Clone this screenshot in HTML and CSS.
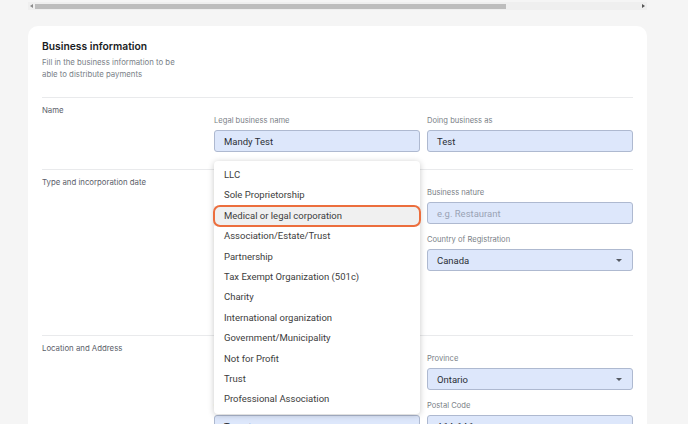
FILE: index.html
```html
<!DOCTYPE html>
<html lang="en">
<head>
<meta charset="utf-8">
<title>Business information</title>
<link rel="stylesheet" href="styles.css">
</head>
<body>
<div class="hscroll">
  <span class="arrow arrow-left"></span>
  <div class="track"><div class="thumb"></div></div>
  <span class="arrow arrow-right"></span>
</div>
<div class="card">
  <div class="header">
    <h1 class="title">Business information</h1>
    <p class="subtitle">Fill in the business information to be able to distribute payments</p>
  </div>

  <section class="section">
    <div class="section-title">Name</div>
    <div class="col">
      <div class="field">
        <div class="label">Legal business name</div>
        <div class="input">Mandy Test</div>
      </div>
    </div>
    <div class="col">
      <div class="field">
        <div class="label">Doing business as</div>
        <div class="input">Test</div>
      </div>
    </div>
  </section>

  <section class="section">
    <div class="section-title">Type and incorporation date</div>
    <div class="col">
      <div class="field">
        <div class="label">Business type</div>
        <div class="input select"><span class="caret"></span></div>
      </div>
      <div class="field">
        <div class="label">Incorporation date</div>
        <div class="input"></div>
      </div>
      <div class="field">
        <div class="label">Registration number</div>
        <div class="input"></div>
      </div>
    </div>
    <div class="col">
      <div class="field">
        <div class="label">Business nature</div>
        <div class="input placeholder">e.g. Restaurant</div>
      </div>
      <div class="field">
        <div class="label">Country of Registration</div>
        <div class="input select">Canada<span class="caret"></span></div>
      </div>
    </div>
  </section>

  <section class="section">
    <div class="section-title">Location and Address</div>
    <div class="col">
      <div class="field">
        <div class="label">Street address</div>
        <div class="input"></div>
      </div>
      <div class="field">
        <div class="label">City</div>
        <div class="input">Toronto</div>
      </div>
    </div>
    <div class="col">
      <div class="field">
        <div class="label">Province</div>
        <div class="input select">Ontario<span class="caret"></span></div>
      </div>
      <div class="field">
        <div class="label">Postal Code</div>
        <div class="input">A1A 1A1</div>
      </div>
    </div>
  </section>

  <ul class="menu">
    <li class="menu-item">LLC</li>
    <li class="menu-item">Sole Proprietorship</li>
    <li class="menu-item is-active">Medical or legal corporation</li>
    <li class="menu-item">Association/Estate/Trust</li>
    <li class="menu-item">Partnership</li>
    <li class="menu-item">Tax Exempt Organization (501c)</li>
    <li class="menu-item">Charity</li>
    <li class="menu-item">International organization</li>
    <li class="menu-item">Government/Municipality</li>
    <li class="menu-item">Not for Profit</li>
    <li class="menu-item">Trust</li>
    <li class="menu-item">Professional Association</li>
  </ul>
</div>
</body>
</html>
```

FILE: styles.css
```css
* { box-sizing: border-box; }

html, body {
  margin: 0;
  padding: 0;
  height: 100%;
  overflow: hidden;
}

body {
  background: #f5f5f5;
  font-family: Inter, "Noto Sans", sans-serif;
}

.hscroll {
  display: flex;
  align-items: center;
  width: 619px;
  height: 8px;
  margin: 2px 0 0 28px;
  background: #efefef;
}

.arrow {
  width: 0;
  height: 0;
  margin: 0 2px;
  border-top: 2px solid transparent;
  border-bottom: 2px solid transparent;
}

.arrow-left { border-right: 3px solid #8a8a8a; }
.arrow-right { border-left: 3px solid #555; }

.track {
  flex: 1;
  height: 100%;
  display: flex;
  align-items: center;
}

.thumb {
  width: 471px;
  height: 5px;
  background: #bdbdbd;
}

.card {
  position: relative;
  width: 619px;
  height: 500px;
  margin: 16px 0 0 28px;
  padding: 13px 14px 0;
  background: #ffffff;
  border-radius: 10px;
}

.header {
  padding-bottom: 17px;
}

.title {
  margin: 0;
  font-size: 10.3px;
  line-height: 14px;
  font-weight: 600;
  color: #1a1d24;
}

.subtitle {
  margin: 3px 0 0;
  max-width: 150px;
  font-size: 7.8px;
  line-height: 12px;
  color: #7a7f88;
}

.section {
  display: grid;
  grid-template-columns: 165px 206px 206px;
  column-gap: 7px;
  border-top: 1px solid #e9eaec;
  padding: 7px 0 17px;
}

.section-title {
  font-size: 7.8px;
  line-height: 11px;
  color: #5b606a;
}

.col {
  padding-top: 11px;
}

.field + .field {
  margin-top: 11px;
}

.label {
  font-size: 7.6px;
  line-height: 10px;
  color: #7b7f87;
  margin-bottom: 4px;
}

.input {
  display: flex;
  align-items: center;
  height: 22px;
  padding: 0 9px;
  background: #dde7fb;
  border: 1px solid #aeb9d0;
  border-radius: 3px;
  font-family: Roboto, "Liberation Sans", sans-serif;
  font-size: 9.5px;
  color: #2b2f36;
}

.placeholder {
  color: #9aa3b5;
}

.caret {
  margin-left: auto;
  margin-right: 1px;
  width: 0;
  height: 0;
  border-left: 3px solid transparent;
  border-right: 3px solid transparent;
  border-top: 3px solid #555a63;
}

.menu {
  position: absolute;
  left: 186px;
  top: 135px;
  width: 206px;
  margin: 0;
  padding: 4px 0;
  list-style: none;
  background: #ffffff;
  border-radius: 4px;
  box-shadow: 0 1px 6px rgba(0, 0, 0, 0.22);
  font-family: Roboto, "Liberation Sans", sans-serif;
  font-size: 9.5px;
  color: #3d3d3d;
}

.menu-item {
  position: relative;
  height: 20.4px;
  line-height: 20.4px;
  padding: 0 10px;
}

.menu-item.is-active {
  background: #f0f0f0;
}

.menu-item.is-active::after {
  content: "";
  position: absolute;
  left: -1px;
  right: -1px;
  top: -1px;
  bottom: -1px;
  border: 2px solid #ec6e3d;
  border-radius: 7px;
}
```
